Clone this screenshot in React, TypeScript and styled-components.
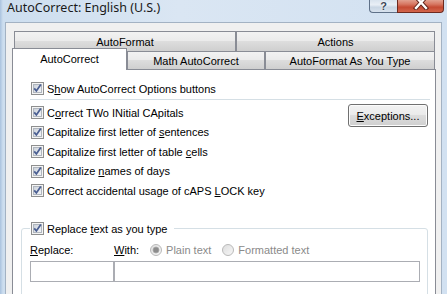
import styled, { createGlobalStyle } from 'styled-components';

const GlobalStyle = createGlobalStyle`
  html, body {
    margin: 0;
    padding: 0;
  }
  body {
    width: 447px;
    height: 294px;
    overflow: hidden;
    background: #cfdff0;
  }
`;

const Window = styled.div`
  width: 447px;
  height: 294px;
  overflow: hidden;
  display: flex;
  flex-direction: column;
  background: linear-gradient(to right, #a9c2de 0px, #cddeef 3px, #dae6f3 40%, #d2e1f1 100%);
  font-family: 'Liberation Sans', Arial, sans-serif;
  font-size: 11px;
  color: #000;
`;

const TitleBar = styled.div`
  height: 22px;
  flex-shrink: 0;
  display: flex;
  align-items: flex-start;
`;

const Title = styled.div`
  font-family: 'Noto Sans', sans-serif;
  font-size: 12.5px;
  line-height: 16px;
  padding-left: 7px;
  color: #1a1a1a;
`;

const CaptionButtons = styled.div`
  margin-left: auto;
  margin-right: 3px;
  display: flex;
`;

const HelpButton = styled.div`
  width: 28px;
  height: 13px;
  box-sizing: border-box;
  border: 1px solid #5f7188;
  border-top: none;
  border-right: none;
  border-radius: 0 0 0 4px;
  background: linear-gradient(to bottom, #d9e3ee 0%, #e9eff6 40%, #c9d6e4 60%, #d8e2ee 100%);
  display: flex;
  justify-content: center;
  align-items: center;
  font-family: 'Liberation Sans', Arial, sans-serif;
  font-weight: bold;
  font-size: 11px;
  line-height: 11px;
  color: #3b4656;
  text-shadow: 0 0 2px #fff, 0 0 1px #fff;
`;

const CloseButton = styled.div`
  width: 47px;
  height: 13px;
  box-sizing: border-box;
  border: 1px solid #6e2a1f;
  border-top: none;
  border-radius: 0 0 4px 0;
  background: linear-gradient(to bottom, #e2a08f 0%, #d77762 35%, #c54a33 60%, #d3664c 100%);
  display: flex;
  justify-content: center;
  align-items: flex-end;
  overflow: hidden;
`;

const Client = styled.div`
  flex: 1;
  min-height: 0;
  margin: 0 5px 0 5px;
  background: #f0f0f0;
  border: 1px solid #a3b2c3;
  border-bottom: none;
  padding: 8px 5px 0 6px;
  display: flex;
  flex-direction: column;
`;

const TabRow = styled.div<{ $h: number; $indent?: number }>`
  display: flex;
  align-items: flex-end;
  height: ${(p) => p.$h}px;
  padding-left: ${(p) => p.$indent ?? 0}px;
  flex-shrink: 0;
`;

const Tab = styled.div<{ $w: number; $selected?: boolean }>`
  width: ${(p) => p.$w}px;
  height: ${(p) => (p.$selected ? '22px' : '100%')};
  margin-bottom: ${(p) => (p.$selected ? '-1px' : '0')};
  position: ${(p) => (p.$selected ? 'relative' : 'static')};
  z-index: ${(p) => (p.$selected ? 1 : 0)};
  box-sizing: border-box;
  border: 1px solid #898c95;
  border-bottom: none;
  background: ${(p) =>
    p.$selected
      ? '#fff'
      : 'linear-gradient(to bottom, #f2f2f2 0%, #ebebeb 45%, #dddddd 50%, #cfcfcf 100%)'};
  display: flex;
  align-items: center;
  justify-content: center;
  padding-bottom: ${(p) => (p.$selected ? '2px' : '0')};
  white-space: nowrap;
`;

const Panel = styled.div`
  flex: 1;
  background: #fff;
  border: 1px solid #898c95;
  border-bottom: none;
  padding-top: 9px;
  display: flex;
  flex-direction: column;
`;

const CheckRow = styled.div<{ $h?: number }>`
  height: ${(p) => p.$h ?? 19}px;
  display: flex;
  align-items: center;
  gap: 3px;
  padding-left: 18px;
  white-space: nowrap;
`;

const Separator = styled.div`
  height: 1px;
  background: #d5dfe5;
  margin: 1px 5px 3px 17px;
`;

const OptionsArea = styled.div`
  display: flex;
  align-items: flex-start;
`;

const CheckList = styled.div`
  display: flex;
  flex-direction: column;
`;

const PushButton = styled.div`
  margin: 1px 7px 0 auto;
  width: 80px;
  height: 23px;
  box-sizing: border-box;
  border: 1px solid #707070;
  border-radius: 3px;
  background: linear-gradient(to bottom, #f2f2f2 0%, #ebebeb 45%, #dddddd 50%, #cfcfcf 100%);
  box-shadow: inset 0 0 0 1px #fcfcfc;
  display: flex;
  align-items: center;
  justify-content: center;
`;

const Group = styled.fieldset`
  margin: 21px 7px 0 8px;
  min-width: 0;
  border: 1px solid #d5dfe5;
  border-radius: 3px;
  padding: 0 7px 30px 8px;
`;

const Legend = styled.legend`
  padding: 0 7px 0 1px;
  height: 14px;
  display: flex;
  align-items: center;
  gap: 3px;
  white-space: nowrap;
`;

const FieldGrid = styled.div`
  display: grid;
  grid-template-columns: 84px 1fr;
  grid-template-rows: 16px 21px;
  row-gap: 3px;
  margin-top: 6px;
`;

const FieldLabel = styled.div`
  display: flex;
  align-items: center;
  white-space: nowrap;
`;

const RadioOption = styled.div`
  display: flex;
  align-items: center;
  gap: 4px;
  margin-left: 11px;
  color: #8a8a8a;
`;

const TextBox = styled.div`
  height: 21px;
  box-sizing: border-box;
  border: 1px solid #abadb3;
  background: #fff;
`;

const Key = styled.span`
  text-decoration: underline;
  text-underline-offset: 1px;
`;

const CheckBox = () => (
  <svg width="13" height="13" viewBox="0 0 13 13" style={{ flexShrink: 0 }}>
    <defs>
      <linearGradient id="cbFill" x1="0" y1="0" x2="1" y2="1">
        <stop offset="0" stopColor="#c9d0d9" />
        <stop offset="1" stopColor="#f7f8fa" />
      </linearGradient>
    </defs>
    <rect x="0.5" y="0.5" width="12" height="12" fill="#f4f4f4" stroke="#8e8f8f" />
    <rect x="2.5" y="2.5" width="8" height="8" fill="url(#cbFill)" stroke="#b0b6be" />
    <path d="M3.2 6.3 L5.4 8.9 L9.8 2.6" fill="none" stroke="#4b5f92" strokeWidth="1.8" />
  </svg>
);

const Radio = ({ checked }: { checked?: boolean }) => (
  <svg width="12" height="12" viewBox="0 0 12 12" style={{ flexShrink: 0 }}>
    <defs>
      <linearGradient id="rdFill" x1="0" y1="0" x2="1" y2="1">
        <stop offset="0" stopColor="#dcdcdc" />
        <stop offset="1" stopColor="#f8f8f8" />
      </linearGradient>
    </defs>
    <circle cx="6" cy="6" r="5.5" fill="url(#rdFill)" stroke="#b9b9b9" />
    {checked && <circle cx="6" cy="6" r="3" fill="#8c8c8c" stroke="#a8a8a8" strokeWidth="0.8" />}
  </svg>
);

const CloseGlyph = () => (
  <svg width="16" height="14" viewBox="0 0 16 14" style={{ marginBottom: 2 }}>
    <path d="M3 1 L13 12 M13 1 L3 12" stroke="#5a1f16" strokeWidth="4.2" strokeLinecap="square" />
    <path d="M3 1 L13 12 M13 1 L3 12" stroke="#fff" strokeWidth="2.4" strokeLinecap="square" />
  </svg>
);

const rows = [
  <>
    C<Key>o</Key>rrect TWo INitial CApitals
  </>,
  <>
    Capitalize first letter of <Key>s</Key>entences
  </>,
  <>
    Capitalize first letter of table <Key>c</Key>ells
  </>,
  <>
    Capitalize <Key>n</Key>ames of days
  </>,
  <>
    Correct accidental usage of cAPS <Key>L</Key>OCK key
  </>,
];

export default function App() {
  return (
    <>
      <GlobalStyle />
      <Window>
        <TitleBar>
          <Title>AutoCorrect: English (U.S.)</Title>
          <CaptionButtons>
            <HelpButton>?</HelpButton>
            <CloseButton>
              <CloseGlyph />
            </CloseButton>
          </CaptionButtons>
        </TitleBar>
        <Client>
          <TabRow $h={20} $indent={2}>
            <Tab $w={222}>AutoFormat</Tab>
            <Tab $w={199}>Actions</Tab>
          </TabRow>
          <TabRow $h={18}>
            <Tab $w={115} $selected>
              AutoCorrect
            </Tab>
            <Tab $w={138}>Math AutoCorrect</Tab>
            <Tab $w={170}>AutoFormat As You Type</Tab>
          </TabRow>
          <Panel>
            <CheckRow>
              <CheckBox />
              <span>
                S<Key>h</Key>ow AutoCorrect Options buttons
              </span>
            </CheckRow>
            <Separator />
            <OptionsArea>
              <CheckList>
                {rows.map((label, i) => (
                  <CheckRow key={i} $h={19.5}>
                    <CheckBox />
                    <span>{label}</span>
                  </CheckRow>
                ))}
              </CheckList>
              <PushButton>
                <span>
                  <Key>E</Key>xceptions...
                </span>
              </PushButton>
            </OptionsArea>
            <Group>
              <Legend>
                <CheckBox />
                <span>
                  Replace <Key>t</Key>ext as you type
                </span>
              </Legend>
              <FieldGrid>
                <FieldLabel>
                  <span>
                    <Key>R</Key>eplace:
                  </span>
                </FieldLabel>
                <FieldLabel>
                  <span>
                    <Key>W</Key>ith:
                  </span>
                  <RadioOption>
                    <Radio checked />
                    Plain text
                  </RadioOption>
                  <RadioOption>
                    <Radio />
                    Formatted text
                  </RadioOption>
                </FieldLabel>
                <TextBox />
                <TextBox />
              </FieldGrid>
            </Group>
          </Panel>
        </Client>
      </Window>
    </>
  );
}
